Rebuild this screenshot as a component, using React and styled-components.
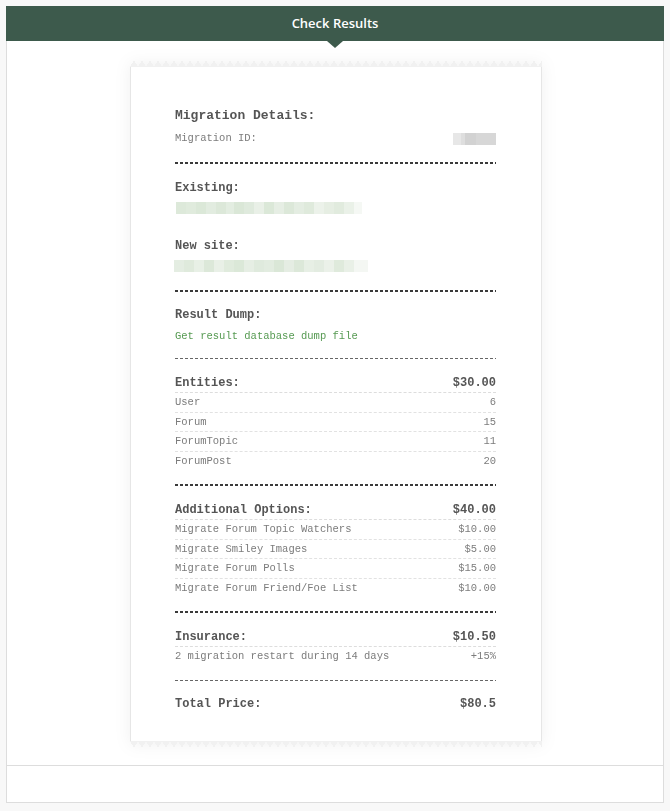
import styled, { createGlobalStyle } from "styled-components"

const GlobalStyle = createGlobalStyle`
  body {
    margin: 0;
    background: #f8f8f8;
    font-family: "Open Sans", "Liberation Sans", sans-serif;
  }
`

const Panel = styled.div`
  margin: 6px 6px 9px;
  background: #fff;
  border: 1px solid #ddd;
  border-top: none;
`

const Header = styled.div`
  position: relative;
  height: 35px;
  margin: 0 -1px;
  background: #3d5a4c;
  color: #fff;
  font-size: 13px;
  font-weight: 600;
  display: flex;
  align-items: center;
  justify-content: center;
  padding-bottom: 1px;
  box-sizing: border-box;

  &::after {
    content: "";
    position: absolute;
    left: 50%;
    bottom: -7px;
    margin-left: -8px;
    border-left: 8px solid transparent;
    border-right: 8px solid transparent;
    border-top: 7px solid #3d5a4c;
  }
`

const Content = styled.div`
  padding: 19px 0 17px;
  display: flex;
  justify-content: center;
`

const Footer = styled.div`
  height: 36px;
  border-top: 1px solid #ddd;
`

const Receipt = styled.div`
  width: 412px;
  margin-left: 2px;
  filter: drop-shadow(0 0 8px rgba(0, 0, 0, 0.06));
`

const Teeth = styled.div`
  height: 7px;
  background: ${p => p.$bottom
    ? "conic-gradient(from -30deg at 50% 100%, #f1f1f1 0 60deg, transparent 60deg)"
    : "conic-gradient(from 150deg at 50% 0, #f1f1f1 0 60deg, transparent 60deg)"};
  background-size: 8px 7px;
`

const Paper = styled.div`
  display: flex;
  flex-direction: column;
  background: #fff;
  border-left: 1px solid #e6e6e6;
  border-right: 1px solid #e6e6e6;
  padding: 41px 45px 29px 44px;
  font-family: "Liberation Mono", "DejaVu Sans Mono", monospace;
  color: #555;
`

const Title = styled.div`
  font-size: 13px;
  font-weight: 700;
  line-height: 16px;
  color: #555;
  margin-bottom: 7px;
`

const Heading = styled.div`
  font-size: 12px;
  font-weight: 700;
  line-height: 16px;
  color: #555;
  margin-top: ${p => p.$gap || 0}px;
`

const Line = styled.div`
  display: flex;
  justify-content: space-between;
  align-items: center;
  font-size: 10.5px;
  line-height: 15px;
  color: #7c7c7c;
  margin-bottom: 1px;
`

const Link = styled.a`
  display: block;
  margin-top: 6px;
  font-size: 10.5px;
  line-height: 14px;
  color: #569a52;
  text-decoration: none;
  cursor: pointer;
`

const Divider = styled.div`
  height: ${p => (p.$thin ? 1 : 2)}px;
  margin: 15px 0;
  background: ${p => p.$thin
    ? "repeating-linear-gradient(90deg, #666 0 3px, transparent 3px 5px)"
    : "repeating-linear-gradient(90deg, #3a3a3a 0 3px, transparent 3px 5px)"};
`

const Ledger = styled.div`
  display: flex;
  flex-direction: column;
`

const LedgerHead = styled.div`
  display: flex;
  justify-content: space-between;
  font-size: 12px;
  font-weight: 700;
  line-height: 16px;
  color: #555;
  padding: ${p => (p.$plain ? "0" : "1px 0")};
  border-bottom: ${p => (p.$plain ? "none" : "1px dashed #ddd")};
`

const LedgerRow = styled.div`
  display: flex;
  justify-content: space-between;
  font-size: 10.5px;
  line-height: 14.5px;
  color: #7c7c7c;
  padding: 2px 0 2px;
  border-bottom: 1px dashed #e2e2e2;

  &:last-child {
    border-bottom: none;
    padding-bottom: 1px;
  }
`

const Smear = styled.div`
  display: flex;
  height: 12px;
  margin: ${p => p.$m || "0"};
`

const Cell = styled.span`
  width: ${p => p.$w}px;
  height: 100%;
  background: ${p => p.$c};
`

// pixelated placeholders for masked values
const blurId = [[8, "#e7e7e7"], [4, "#dedede"], [11, "#d2d2d2"], [20, "#d7d7d7"]]
const blurOld = [
  [10, "#dde9da"], [10, "#e0ebdd"], [10, "#dbe8d8"], [10, "#e2ece0"], [10, "#dce8d9"],
  [8, "#e3ede1"], [10, "#dae7d7"], [10, "#dfeadd"], [10, "#e9f0e7"], [10, "#dbe8d8"],
  [10, "#e6eee4"], [10, "#dce8d9"], [10, "#e4ede2"], [10, "#dfeadc"], [10, "#ecf2ea"],
  [10, "#e6eee3"], [10, "#e1ebde"], [10, "#eaf1e8"], [8, "#f5f8f4"]
]
const blurNew = [
  [10, "#e4ede2"], [10, "#dfeadc"], [10, "#e8f0e6"], [10, "#dce8d9"], [10, "#e9f0e7"],
  [10, "#e0ebdd"], [10, "#dbe8d8"], [10, "#e6eee4"], [10, "#dfeadd"], [10, "#e2ece0"],
  [10, "#dae7d7"], [10, "#e5ede3"], [10, "#dce8d9"], [10, "#e7efe5"], [10, "#e3ece1"],
  [10, "#ebf1e9"], [10, "#dfeadc"], [10, "#e9f0e7"], [14, "#f4f7f3"]
]

const Blur = ({ cells, m }) => (
  <Smear $m={m}>
    {cells.map(([w, c], i) => <Cell key={i} $w={w} $c={c} />)}
  </Smear>
)

const entities = [
  ["User", "6"],
  ["Forum", "15"],
  ["ForumTopic", "11"],
  ["ForumPost", "20"],
]

const options = [
  ["Migrate Forum Topic Watchers", "$10.00"],
  ["Migrate Smiley Images", "$5.00"],
  ["Migrate Forum Polls", "$15.00"],
  ["Migrate Forum Friend/Foe List", "$10.00"],
]

const Block = ({ title, total, rows }) => (
  <Ledger>
    <LedgerHead>
      <span>{title}</span>
      <span>{total}</span>
    </LedgerHead>
    {rows.map(([name, value]) => (
      <LedgerRow key={name}>
        <span>{name}</span>
        <span>{value}</span>
      </LedgerRow>
    ))}
  </Ledger>
)

const App = () => {
  return (
    <>
      <GlobalStyle />
      <Panel>
        <Header>Check Results</Header>
        <Content>
          <Receipt>
            <Teeth />
            <Paper>
              <Title>Migration Details:</Title>
              <Line>
                <span>Migration ID:</span>
                <Blur cells={blurId} />
              </Line>

              <Divider />

              <Heading $gap={1}>Existing:</Heading>
              <Blur cells={blurOld} m="6px 0 0 1px" />
              <Heading $gap={24}>New site:</Heading>
              <Blur cells={blurNew} m="6px 0 3px -1px" />

              <Divider />

              <Heading>Result Dump:</Heading>
              <Link>Get result database dump file</Link>

              <Divider $thin />

              <Block title="Entities:" total="$30.00" rows={entities} />

              <Divider />

              <Block title="Additional Options:" total="$40.00" rows={options} />

              <Divider />

              <Block
                title="Insurance:"
                total="$10.50"
                rows={[["2 migration restart during 14 days", "+15%"]]}
              />

              <Divider $thin />

              <LedgerHead $plain>
                <span>Total Price:</span>
                <span>$80.5</span>
              </LedgerHead>
            </Paper>
            <Teeth $bottom />
          </Receipt>
        </Content>
        <Footer />
      </Panel>
    </>
  )
}

export default App
